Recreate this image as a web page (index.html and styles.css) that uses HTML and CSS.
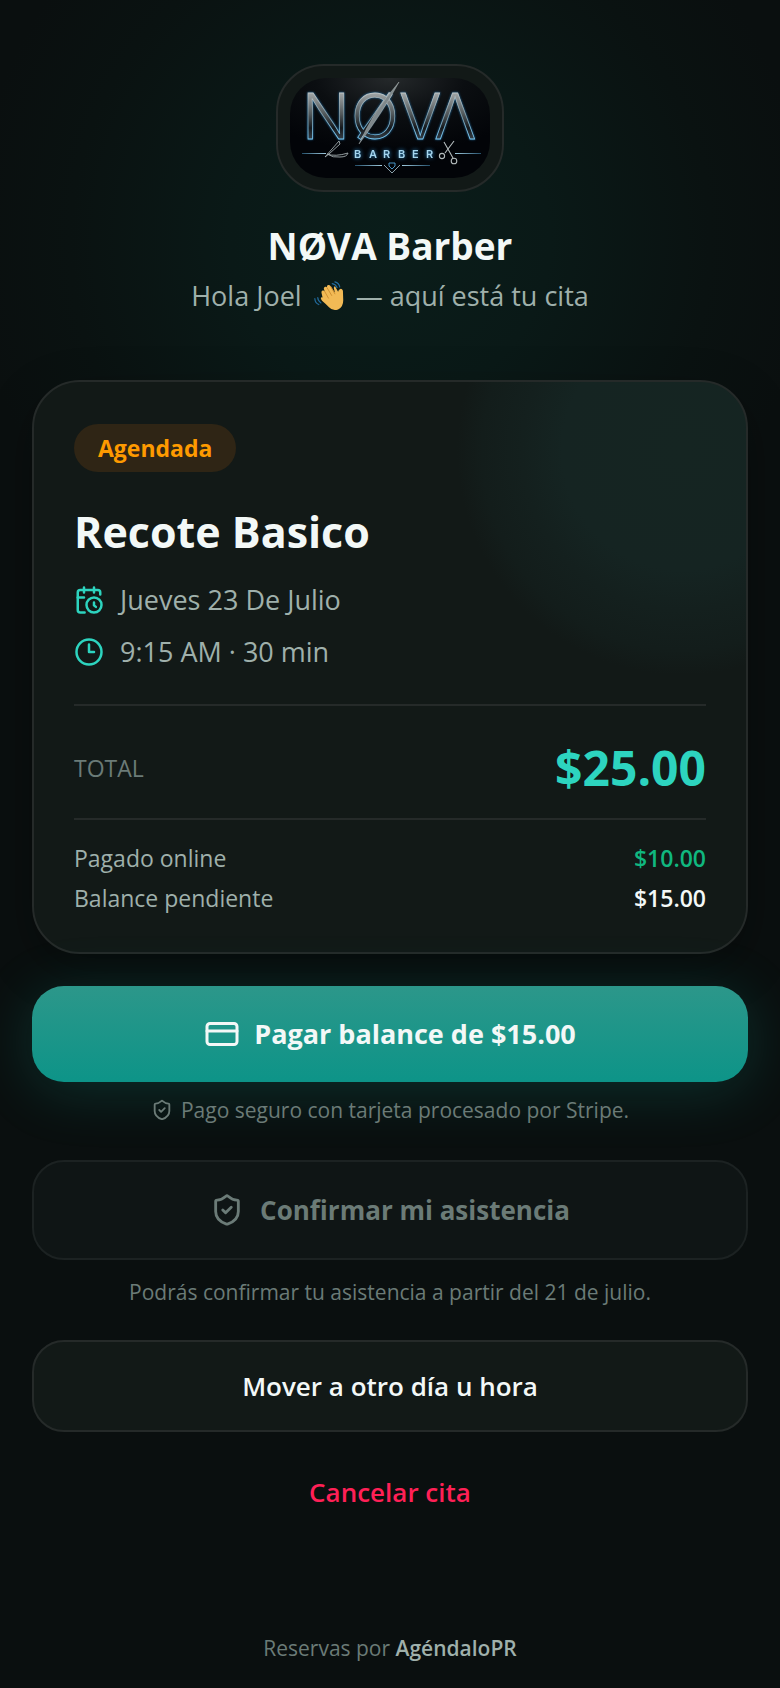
FILE: index.html
```html
<!DOCTYPE html>
<html lang="es">
<head>
    <meta charset="UTF-8">
    <meta name="viewport" content="width=device-width, initial-scale=1.0">
    <title>NØVA Barber</title>
    <link rel="stylesheet" href="styles.css">
</head>
<body>
    <main class="page">
        <header class="header">
            <div class="logo-box">
                <svg class="logo" viewBox="0 0 200 100" role="img" aria-label="NØVA Barber">
                    <defs>
                        <radialGradient id="logoBg" cx="50%" cy="0%" r="75%">
                            <stop offset="0" stop-color="#25292b"/>
                            <stop offset="0.5" stop-color="#0b0e11"/>
                            <stop offset="1" stop-color="#020408"/>
                        </radialGradient>
                        <linearGradient id="metal" gradientUnits="userSpaceOnUse" x1="0" y1="14" x2="0" y2="62">
                            <stop offset="0" stop-color="#a4a9aa"/>
                            <stop offset="0.45" stop-color="#535a5d"/>
                            <stop offset="0.75" stop-color="#15191d"/>
                            <stop offset="1" stop-color="#39434b"/>
                        </linearGradient>
                        <linearGradient id="edge" gradientUnits="userSpaceOnUse" x1="0" y1="14" x2="0" y2="62">
                            <stop offset="0" stop-color="#c0c6c6"/>
                            <stop offset="0.5" stop-color="#7f98a2"/>
                            <stop offset="1" stop-color="#7accf8"/>
                        </linearGradient>
                        <linearGradient id="lineLeft">
                            <stop offset="0" stop-color="#24506b"/>
                            <stop offset="1" stop-color="#9fc9dc"/>
                        </linearGradient>
                        <linearGradient id="lineRight">
                            <stop offset="0" stop-color="#9fc9dc"/>
                            <stop offset="1" stop-color="#24506b"/>
                        </linearGradient>
                    </defs>
                    <rect width="200" height="100" fill="url(#logoBg)"/>
                    <text class="logo-name" x="12 61 109 144" y="61">NØVΛ</text>
                    <path d="M109 4 Q93 34 69 66 Q83 34 109 4Z" fill="#7f888b" stroke="#c3caca" stroke-width="0.4"/>
                    <text class="logo-sub" x="64 79 93 108 122 136" y="80">BARBER</text>
                    <rect x="12" y="75" width="24" height="1" fill="url(#lineLeft)"/>
                    <rect x="165" y="75" width="26" height="1" fill="url(#lineRight)"/>
                    <rect x="65" y="87" width="27" height="1" fill="url(#lineLeft)"/>
                    <rect x="112" y="87" width="28" height="1" fill="url(#lineRight)"/>
                    <!-- razor -->
                    <g fill="none" stroke="#a3adaf" stroke-width="0.9">
                        <path d="M35 79 49 63 50 66 39 76Z"/>
                        <path d="M37 76q8 3 21-1-1 4-8 4-7 1-13-3Z"/>
                    </g>
                    <!-- scissors -->
                    <g fill="none" stroke="#b4bcbd" stroke-width="1.1">
                        <path d="M154 64 163 80M164 63 155 75"/>
                        <circle cx="152" cy="78" r="2.6"/>
                        <circle cx="164" cy="83" r="2.8"/>
                    </g>
                    <path d="M94 87 102 95 110 87" fill="none" stroke="#8aa0aa" stroke-width="1"/>
                    <path d="M99 85h6v3l-3 3-3-3Z" fill="none" stroke="#4fa3d8" stroke-width="0.9"/>
                </svg>
            </div>
            <h1>NØVA Barber</h1>
            <p class="greeting">
                <span>Hola Joel</span>
                <svg class="wave" viewBox="0 0 28 28" role="img" aria-label="saludo">
                    <path d="M8 15.500 7 11Q6.800 9.300 8 8.900T10 9.600L9.200 7.500Q9 5.800 10.300 5.400T12.500 6.300L12 5.500Q12 4 13.300 3.800T15.500 4.800L19.500 11 18.500 6.500Q18.500 5 19.600 4.900L22.500 10Q22.800 7.800 24.500 7.400T27 9L27.300 18Q27.300 24.500 22.500 26.500T14 24.500Q11 21.500 7.500 18.500 6 16.500 6.500 15.600T8 15.500Z" fill="#f2ba55"/>
                    <path d="M9.800 9.500 13.500 16M12.300 6.500 16.500 13.500M15.500 5 19.500 12" fill="none" stroke="#cf8f31" stroke-width="0.9" stroke-linecap="round"/>
                    <path d="M17 2.500Q20 3 21.500 6M19.500 0.800Q23.500 2 24 5.500M3.500 15.500Q3.500 18.500 6.500 20.500M0.800 16.500Q1 20.500 4.500 22" fill="none" stroke="#226a9c" stroke-width="1.1" stroke-linecap="round"/>
                </svg>
                <span>— aquí está tu cita</span>
            </p>
        </header>

        <section class="card">
            <span class="badge">Agendada</span>
            <h2>Recote Basico</h2>
            <div class="info-row">
                <svg class="icon icon-info" viewBox="0 0 24 24" aria-hidden="true">
                    <path d="M21 7.500V6a2 2 0 0 0-2-2H5a2 2 0 0 0-2 2v14a2 2 0 0 0 2 2h3.500"/>
                    <path d="M16 2v4M8 2v4M3 10h5"/>
                    <path d="M17.500 17.500 16 16.300V14"/>
                    <circle cx="16" cy="16" r="6"/>
                </svg>
                <span>Jueves 23 De Julio</span>
            </div>
            <div class="info-row">
                <svg class="icon icon-info" viewBox="0 0 24 24" aria-hidden="true">
                    <circle cx="12" cy="12" r="10"/>
                    <path d="M12 6v6h4"/>
                </svg>
                <span>9:15 AM · 30 min</span>
            </div>
            <div class="total">
                <span class="total-label">TOTAL</span>
                <span class="total-amount">$25.00</span>
            </div>
            <dl class="payments">
                <div class="payment">
                    <dt>Pagado online</dt>
                    <dd class="paid">$10.00</dd>
                </div>
                <div class="payment">
                    <dt>Balance pendiente</dt>
                    <dd>$15.00</dd>
                </div>
            </dl>
        </section>

        <button type="button" class="btn btn-pay">
            <svg class="icon icon-card" viewBox="0 0 24 24" aria-hidden="true">
                <rect x="2" y="5" width="20" height="14" rx="2"/>
                <path d="M2 10h20"/>
            </svg>
            Pagar balance de $15.00
        </button>
        <p class="hint hint-pay">
            <svg class="icon icon-small" viewBox="0 0 24 24" aria-hidden="true">
                <path d="M20 13c0 5-3.500 7.500-7.660 8.950a1 1 0 0 1-.67-.01C7.500 20.500 4 18 4 13V6a1 1 0 0 1 1-1c2 0 4.500-1.200 6.240-2.720a1.170 1.170 0 0 1 1.520 0C14.510 3.810 17 5 19 5a1 1 0 0 1 1 1z"/>
                <path d="m9 12 2 2 4-4"/>
            </svg>
            Pago seguro con tarjeta procesado por Stripe.
        </p>

        <button type="button" class="btn btn-confirm" disabled>
            <svg class="icon icon-shield" viewBox="0 0 24 24" aria-hidden="true">
                <path d="M20 13c0 5-3.500 7.500-7.660 8.950a1 1 0 0 1-.67-.01C7.500 20.500 4 18 4 13V6a1 1 0 0 1 1-1c2 0 4.500-1.200 6.240-2.720a1.170 1.170 0 0 1 1.520 0C14.510 3.810 17 5 19 5a1 1 0 0 1 1 1z"/>
                <path d="m9 12 2 2 4-4"/>
            </svg>
            Confirmar mi asistencia
        </button>
        <p class="hint">Podrás confirmar tu asistencia a partir del 21 de julio.</p>

        <button type="button" class="btn btn-move">Mover a otro día u hora</button>
        <button type="button" class="btn btn-cancel">Cancelar cita</button>

        <footer class="footer">Reservas por <strong>AgéndaloPR</strong></footer>
    </main>
</body>
</html>
```

FILE: styles.css
```css
* {
    box-sizing: border-box;
}
body {
    margin: 0;
    background-color: #0a0f0f;
    color: #f3f8f7;
    font-family: "Open Sans", "Noto Sans", sans-serif;
    font-size: 27px;
    line-height: 36px;
}
h1, h2, p, dl, dd {
    margin: 0;
}
.page {
    display: flex;
    flex-direction: column;
    min-height: 100vh;
    padding: 64px 32px 22px;
    background: radial-gradient(circle at 50% 240px, #0a1d1a 0, #0a1917 160px, #0a1211 320px, rgba(10, 15, 15, 0) 420px);
}

/* Header */
.header {
    display: flex;
    flex-direction: column;
    align-items: center;
    margin-bottom: 66px;
    text-align: center;
}
.logo-box {
    padding: 12px;
    border: 2px solid #252a29;
    border-radius: 48px;
    background-color: #121917;
}
.logo {
    display: block;
    width: 200px;
    height: 100px;
    border-radius: 36px;
}
.logo-name {
    font-family: Inter, sans-serif;
    font-size: 63px;
    font-weight: 300;
    fill: url(#metal);
    stroke: url(#edge);
    stroke-width: 0.8;
    filter: drop-shadow(0 0 1px #1f6fa8);
}
.logo-sub {
    font-family: Inter, sans-serif;
    font-size: 11px;
    font-weight: 600;
    fill: #a5d5ee;
    filter: drop-shadow(0 0 2px #2f8fd0);
}
h1 {
    margin-top: 28px;
    font-size: 37px;
    font-weight: 700;
    line-height: 52px;
}
.greeting {
    display: flex;
    align-items: center;
    gap: 12px;
    margin-top: 6px;
    color: #9fb0ab;
}
.wave {
    width: 30px;
    height: 30px;
}

/* Appointment card */
.card {
    padding: 42px 40px 34px;
    border: 2px solid #252a29;
    border-radius: 48px;
    background: radial-gradient(circle at calc(100% - 64px) 68px, #152522 0, #152422 120px, #14201e 160px, #131d1b 200px, #121917 225px) #121917;
    box-shadow: 0 16px 48px rgba(0, 0, 0, 0.3);
}
.badge {
    display: inline-block;
    padding: 6px 24px;
    border-radius: 24px;
    background-color: #2f2515;
    color: #fe9a00;
    font-size: 23px;
    font-weight: 700;
}
h2 {
    margin: 30px 0 12px;
    font-size: 43px;
    font-weight: 700;
    line-height: 60px;
}
.info-row {
    display: flex;
    align-items: center;
    gap: 16px;
    padding: 8px 0;
    color: #9fb0ab;
}
.icon {
    flex: none;
    fill: none;
    stroke: currentColor;
    stroke-width: 2;
    stroke-linecap: round;
    stroke-linejoin: round;
}
.icon-info {
    width: 30px;
    height: 30px;
    color: #2dd4bf;
}
.total {
    display: flex;
    align-items: center;
    justify-content: space-between;
    margin-top: 26px;
    padding: 32px 0 20px;
    border-top: 2px solid #252a29;
    border-bottom: 2px solid #252a29;
    line-height: 60px;
}
.total-label {
    color: #6b7b77;
    font-size: 23px;
    font-weight: 500;
}
.total-amount {
    color: #2dd4bf;
    font-size: 48px;
    font-weight: 700;
}
.payments {
    padding-top: 18px;
    color: #9fb0ab;
    font-size: 23px;
    line-height: 40px;
}
.payment {
    display: flex;
    justify-content: space-between;
}
.payment dd {
    color: #f3f8f7;
    font-weight: 600;
}
.payment .paid {
    color: #10b77f;
}

/* Actions */
.btn {
    display: flex;
    align-items: center;
    justify-content: center;
    gap: 16px;
    width: 100%;
    border: 2px solid #252a29;
    border-radius: 32px;
    background-color: #121917;
    color: #f3f8f7;
    font-family: inherit;
    font-size: 26px;
    font-weight: 600;
    line-height: 36px;
    cursor: pointer;
}
.btn-pay {
    gap: 14px;
    margin-top: 32px;
    padding: 30px;
    border: none;
    background: linear-gradient(#2c978a, #0d9488);
    box-shadow: 0 8px 60px rgba(20, 184, 166, 0.2);
    font-size: 27px;
    font-weight: 700;
}
.btn-confirm {
    margin-top: 32px;
    padding: 30px;
    border-color: #1c2222;
    background-color: #0f1515;
    color: #6b7b77;
    font-weight: 700;
    cursor: default;
}
.btn-move {
    margin-top: 30px;
    padding: 26px;
}
.btn-cancel {
    margin-top: 24px;
    padding: 18px;
    border: none;
    background: none;
    color: #ff2056;
}
.icon-card {
    width: 36px;
    height: 36px;
}
.icon-shield {
    width: 34px;
    height: 34px;
}
.icon-small {
    width: 22px;
    height: 22px;
}
.hint {
    margin-top: 14px;
    color: #6b7b77;
    font-size: 21px;
    text-align: center;
}
.hint-pay {
    display: flex;
    align-items: center;
    justify-content: center;
    gap: 8px;
    margin-top: 10px;
}
.footer {
    margin-top: auto;
    color: #6b7b77;
    font-size: 21px;
    text-align: center;
}
.footer strong {
    color: #9fb0ab;
    font-weight: 600;
}
```
